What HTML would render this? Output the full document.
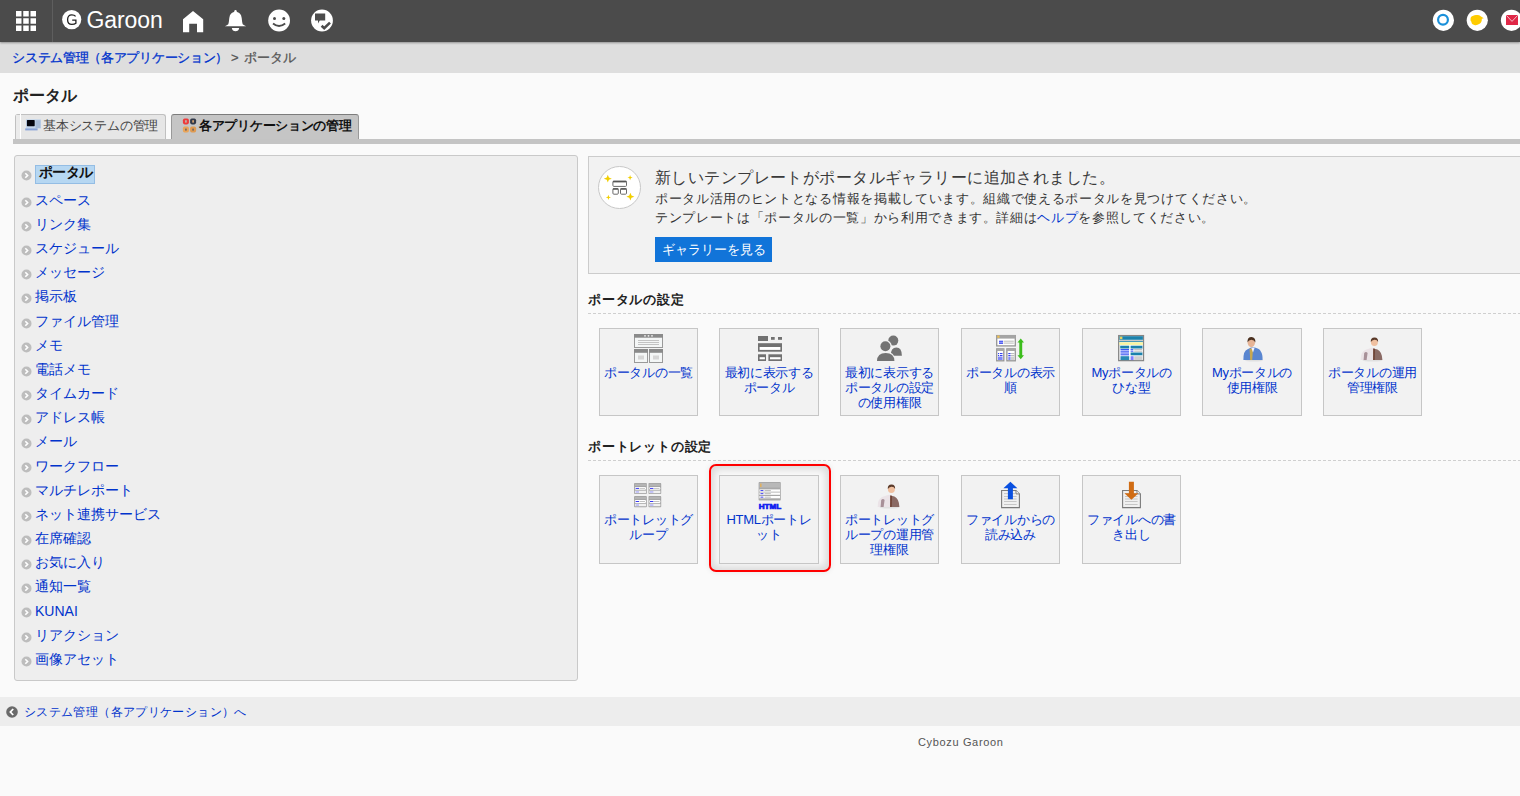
<!DOCTYPE html>
<html lang="ja">
<head>
<meta charset="utf-8">
<style>
*{box-sizing:border-box;margin:0;padding:0}
html,body{width:1520px;height:796px;overflow:hidden}
body{background:#fafafa;font-family:"Liberation Sans",sans-serif;font-size:13px;color:#333;position:relative}
.abs{position:absolute}
a{color:#0033cc;text-decoration:none}
.txt{white-space:nowrap;line-height:14px}
#hdr{left:0;top:0;width:1520px;height:42px;background:#4b4b4b;box-shadow:0 1px 2px rgba(0,0,0,.35);z-index:2}
#sep{left:52px;top:0;width:1px;height:42px;background:#5e5e5e}
#garoon{left:86.5px;top:7px;font-size:23px;line-height:26px;color:#fff;letter-spacing:-0.1px}
#crumb{left:0;top:42px;width:1520px;height:31px;background:#dedede}
#crumb .txt{top:50px}
#title{left:13px;top:88px;font-size:16px;font-weight:bold;color:#222;line-height:16px}
.tab{top:114px;height:25px;border:1px solid #bcbcbc;border-bottom:none;border-radius:3px 3px 0 0}
#tab1{left:15px;width:151px;background:#e6e6e6;border-color:#c0c0c0}
#tab1:before{content:"";position:absolute;left:4px;top:-1px;width:1px;height:25px;background:#fff}
#tab1:after{content:"";position:absolute;left:0;top:0;width:4px;height:24px;background:#ebebeb}
#tab2{left:171px;width:188px;background:#c5c5c5;border-color:#7c7c7c #999}
#bar{left:13px;top:139px;width:1507px;height:5px;background:#c4c4c4}
#left{left:14px;top:155px;width:564px;height:526px;background:#eeeeee;border:1px solid #c9c9c9;border-radius:3px}
.sel{left:35px;top:165px;width:60px;height:19px;background:#b6d7f2;border:1px solid #94bde4;font-weight:bold;color:#111;line-height:13px;padding-left:2.5px;white-space:nowrap;font-size:14px;letter-spacing:-0.4px}
.mi{left:35px;font-size:14px}
#notice{left:588px;top:156px;width:1000px;height:118px;background:#f2f2f2;border:1px solid #cccccc}
#ncirc{left:598px;top:166px;width:43px;height:43px;border-radius:50%;background:#fff;border:1px solid #c8c8c8}
.nl{left:655px;color:#333}
#gbtn{left:655px;top:237px;width:117px;height:25px;background:#1174d9;color:#fff;line-height:25px;padding-left:6.5px;white-space:nowrap}
.h2{left:588px;font-weight:bold;color:#222;letter-spacing:0.8px}
.dash{left:588px;width:932px;height:1px;background-image:linear-gradient(to right,#cfcfcf 0,#cfcfcf 3px,transparent 3px);background-size:5px 1px}
.btn{width:99px;height:88px;background:#f2f2f2;border:1px solid #c6c6c6}
.btn .ic{position:absolute;left:34px;top:5px;width:29px;height:29px}
.btn .ic svg{display:block}
.bl{position:absolute;left:0;top:35.5px;letter-spacing:-0.3px;white-space:nowrap;width:97px;text-align:center;line-height:15px;font-size:13px}
#hl{left:708.6px;top:463.6px;width:122.8px;height:108.8px;border:2.5px solid #ff0000;border-radius:7px;box-shadow:inset 0 0 8px 3px rgba(0,0,0,.14),0 0 5px 1px rgba(0,0,0,.06)}
#bbar{left:0;top:697px;width:1520px;height:29px;background:#ededed}
#foot{left:918px;top:736px;font-size:11px;color:#555;line-height:12px;white-space:nowrap;letter-spacing:0.65px}
</style>
</head>
<body>
<div id="hdr" class="abs">
  <svg class="abs" style="left:16px;top:11px" width="20" height="20" viewBox="0 0 20 20" fill="#fff">
    <rect x="0" y="0" width="5.5" height="5.5"/><rect x="7.25" y="0" width="5.5" height="5.5"/><rect x="14.5" y="0" width="5.5" height="5.5"/>
    <rect x="0" y="7.25" width="5.5" height="5.5"/><rect x="7.25" y="7.25" width="5.5" height="5.5"/><rect x="14.5" y="7.25" width="5.5" height="5.5"/>
    <rect x="0" y="14.5" width="5.5" height="5.5"/><rect x="7.25" y="14.5" width="5.5" height="5.5"/><rect x="14.5" y="14.5" width="5.5" height="5.5"/>
  </svg>
  <div id="sep" class="abs"></div>
  <svg class="abs" style="left:62px;top:10.4px" width="20" height="20" viewBox="0 0 20 20">
    <circle cx="9.7" cy="9.6" r="9.6" fill="#fff"/>
    <path d="M13.6 6.3 Q12.4 4.9 9.8 4.9 Q5.6 4.9 5.6 9.7 Q5.6 14.4 9.8 14.4 Q12.6 14.4 13.9 13.3 V10.2 H10.2" fill="none" stroke="#222" stroke-width="1.3"/>
  </svg>
  <div id="garoon" class="abs txt">Garoon</div>
  <!-- home -->
  <svg class="abs" style="left:182px;top:10px" width="23" height="23" viewBox="0 0 23 23" fill="#fff">
    <path d="M11 1 L21.2 9.2 V22.2 H15 V13.8 H7.2 V22.2 H1 V9.2 Z"/>
  </svg>
  <!-- bell -->
  <svg class="abs" style="left:224px;top:9px" width="23" height="24" viewBox="0 0 23 24" fill="#fff">
    <circle cx="11.5" cy="2.3" r="1.2"/>
    <path d="M11.5 2.8 Q6 3 5.3 9 Q4.9 13.6 4.3 15.2 Q3.1 16.4 0.9 17.2 H22.1 Q19.9 16.4 18.7 15.2 Q18.1 13.6 17.7 9 Q17 3 11.5 2.8 Z"/>
    <path d="M7.8 19 H15.2 Q14.6 22.2 11.5 22.3 Q8.4 22.2 7.8 19 Z"/>
  </svg>
  <!-- smiley -->
  <svg class="abs" style="left:267px;top:9px" width="24" height="24" viewBox="0 0 24 24">
    <circle cx="12.1" cy="11.5" r="10.9" fill="#fff"/>
    <circle cx="7.5" cy="9.5" r="1.5" fill="#4b4b4b"/><circle cx="16.8" cy="9.5" r="1.5" fill="#4b4b4b"/>
    <path d="M6 14.5 Q12 19.4 18.2 14.5" fill="none" stroke="#4b4b4b" stroke-width="1.9"/>
  </svg>
  <!-- checkbubble -->
  <svg class="abs" style="left:310px;top:9px" width="24" height="24" viewBox="0 0 24 24">
    <circle cx="12" cy="11.5" r="10.9" fill="#fff"/>
    <path d="M5 4.5 H15.2 V11.5 H9.8 L8 14.5 V11.5 H5 Z" fill="#4b4b4b"/>
    <path d="M11.6 16.8 L14.2 19.2 L20 13.6" fill="none" stroke="#4b4b4b" stroke-width="2.6"/>
  </svg>
  <!-- right -->
  <svg class="abs" style="left:1430px;top:8px" width="90" height="26" viewBox="0 0 90 26">
    <circle cx="13.4" cy="12.3" r="10.6" fill="#fff"/>
    <circle cx="13" cy="11.8" r="4.9" fill="none" stroke="#1a90da" stroke-width="2.2"/>
    <circle cx="47.3" cy="12.3" r="10.6" fill="#fff"/>
    <path d="M40.5 11.5 Q40.3 8.4 43.2 7.8 Q45 6.6 47.3 7.1 Q49.8 6.8 51 8.6 L53.8 10.3 L51.8 10.8 Q52 14.5 49.6 15.8 Q46.5 17.8 44.4 17 Q41.5 16.5 41.4 13.8 Q40.3 12.8 40.5 11.5 Z" fill="#ffcc00"/>
    <circle cx="81.5" cy="12.3" r="10.6" fill="#fff"/>
    <rect x="76" y="7" width="12" height="10" fill="#e02848"/>
    <path d="M76.3 7.3 L82 13.4 L87.7 7.3" fill="none" stroke="#f4c0c8" stroke-width="1"/>
  </svg>
</div>
<div id="crumb" class="abs">
</div>
<a class="abs txt" style="left:12.2px;top:50.5px;letter-spacing:-0.3px;-webkit-text-stroke:0.3px #0033cc">システム管理（各アプリケーション）</a>
<div class="abs txt" style="left:231px;top:50.5px;color:#555;-webkit-text-stroke:0.3px #555">&gt;</div><div class="abs txt" style="left:244px;top:50.5px;color:#555;-webkit-text-stroke:0.3px #555">ポータル</div>

<div id="title" class="abs txt">ポータル</div>
<div id="tab1" class="abs tab"></div>
<svg class="abs" style="left:25px;top:119px" width="17" height="13" viewBox="0 0 17 13">
  <rect x="1" y="0.3" width="15" height="9.4" fill="#c4d6ec"/>
  <rect x="1.9" y="1.1" width="7.8" height="6.1" rx="0.6" fill="#05060f"/>
  <rect x="10.5" y="1.2" width="5" height="7.8" fill="#a8bcd8"/>
  <rect x="0.2" y="9.4" width="12.4" height="2" fill="#8aa4d8"/>
</svg>
<div class="abs txt" style="left:43px;top:119px;color:#444;letter-spacing:-0.2px">基本システムの管理</div>
<div id="tab2" class="abs tab"></div>
<svg class="abs" style="left:182px;top:117.5px" width="15" height="15" viewBox="0 0 15 15">
  <rect x="0.9" y="0.4" width="6" height="6" rx="1.8" fill="#ee3a3a"/><rect x="3" y="2.2" width="1.8" height="2.4" fill="#c8a8a0"/>
  <rect x="8.1" y="0.4" width="6" height="6" rx="1.8" fill="#333a4a"/><rect x="10.2" y="2.2" width="1.8" height="2.4" fill="#d0a070"/>
  <rect x="0.9" y="8.5" width="6" height="6" rx="1.8" fill="#eaa458"/><rect x="3" y="10.6" width="1.8" height="2" fill="#7a6a60"/>
  <rect x="8.1" y="8.5" width="6" height="6" rx="1.8" fill="#e09a50"/><rect x="10.2" y="10.6" width="1.8" height="2" fill="#7a6a60"/>
</svg>
<div class="abs txt" style="left:199px;top:119px;font-weight:bold;color:#111;letter-spacing:-0.3px">各アプリケーションの管理</div>
<div id="bar" class="abs"></div>

<div id="left" class="abs"></div>
<svg class="abs" style="left:21px;top:170px" width="11" height="11" viewBox="0 0 11 11"><circle cx="5.5" cy="5.5" r="5" fill="#bdbdbd"/><path d="M4.3 3.2 L6.6 5.5 L4.3 7.8" stroke="#fff" stroke-width="1.6" fill="none"/></svg>
<div class="abs sel">ポータル</div>
<svg class="abs" style="left:21px;top:196.7px" width="11" height="11" viewBox="0 0 11 11"><circle cx="5.5" cy="5.5" r="5" fill="#bdbdbd"/><path d="M4.3 3.2 L6.6 5.5 L4.3 7.8" stroke="#fff" stroke-width="1.6" fill="none"/></svg>
<a class="abs mi txt" style="top:192.80px">スペース</a>
<svg class="abs" style="left:21px;top:220.86px" width="11" height="11" viewBox="0 0 11 11"><circle cx="5.5" cy="5.5" r="5" fill="#bdbdbd"/><path d="M4.3 3.2 L6.6 5.5 L4.3 7.8" stroke="#fff" stroke-width="1.6" fill="none"/></svg>
<a class="abs mi txt" style="top:216.96px">リンク集</a>
<svg class="abs" style="left:21px;top:245.02px" width="11" height="11" viewBox="0 0 11 11"><circle cx="5.5" cy="5.5" r="5" fill="#bdbdbd"/><path d="M4.3 3.2 L6.6 5.5 L4.3 7.8" stroke="#fff" stroke-width="1.6" fill="none"/></svg>
<a class="abs mi txt" style="top:241.12px">スケジュール</a>
<svg class="abs" style="left:21px;top:269.18px" width="11" height="11" viewBox="0 0 11 11"><circle cx="5.5" cy="5.5" r="5" fill="#bdbdbd"/><path d="M4.3 3.2 L6.6 5.5 L4.3 7.8" stroke="#fff" stroke-width="1.6" fill="none"/></svg>
<a class="abs mi txt" style="top:265.28px">メッセージ</a>
<svg class="abs" style="left:21px;top:293.34px" width="11" height="11" viewBox="0 0 11 11"><circle cx="5.5" cy="5.5" r="5" fill="#bdbdbd"/><path d="M4.3 3.2 L6.6 5.5 L4.3 7.8" stroke="#fff" stroke-width="1.6" fill="none"/></svg>
<a class="abs mi txt" style="top:289.44px">掲示板</a>
<svg class="abs" style="left:21px;top:317.5px" width="11" height="11" viewBox="0 0 11 11"><circle cx="5.5" cy="5.5" r="5" fill="#bdbdbd"/><path d="M4.3 3.2 L6.6 5.5 L4.3 7.8" stroke="#fff" stroke-width="1.6" fill="none"/></svg>
<a class="abs mi txt" style="top:313.60px">ファイル管理</a>
<svg class="abs" style="left:21px;top:341.66px" width="11" height="11" viewBox="0 0 11 11"><circle cx="5.5" cy="5.5" r="5" fill="#bdbdbd"/><path d="M4.3 3.2 L6.6 5.5 L4.3 7.8" stroke="#fff" stroke-width="1.6" fill="none"/></svg>
<a class="abs mi txt" style="top:337.76px">メモ</a>
<svg class="abs" style="left:21px;top:365.82px" width="11" height="11" viewBox="0 0 11 11"><circle cx="5.5" cy="5.5" r="5" fill="#bdbdbd"/><path d="M4.3 3.2 L6.6 5.5 L4.3 7.8" stroke="#fff" stroke-width="1.6" fill="none"/></svg>
<a class="abs mi txt" style="top:361.92px">電話メモ</a>
<svg class="abs" style="left:21px;top:389.98px" width="11" height="11" viewBox="0 0 11 11"><circle cx="5.5" cy="5.5" r="5" fill="#bdbdbd"/><path d="M4.3 3.2 L6.6 5.5 L4.3 7.8" stroke="#fff" stroke-width="1.6" fill="none"/></svg>
<a class="abs mi txt" style="top:386.08px">タイムカード</a>
<svg class="abs" style="left:21px;top:414.14px" width="11" height="11" viewBox="0 0 11 11"><circle cx="5.5" cy="5.5" r="5" fill="#bdbdbd"/><path d="M4.3 3.2 L6.6 5.5 L4.3 7.8" stroke="#fff" stroke-width="1.6" fill="none"/></svg>
<a class="abs mi txt" style="top:410.24px">アドレス帳</a>
<svg class="abs" style="left:21px;top:438.3px" width="11" height="11" viewBox="0 0 11 11"><circle cx="5.5" cy="5.5" r="5" fill="#bdbdbd"/><path d="M4.3 3.2 L6.6 5.5 L4.3 7.8" stroke="#fff" stroke-width="1.6" fill="none"/></svg>
<a class="abs mi txt" style="top:434.40px">メール</a>
<svg class="abs" style="left:21px;top:462.46px" width="11" height="11" viewBox="0 0 11 11"><circle cx="5.5" cy="5.5" r="5" fill="#bdbdbd"/><path d="M4.3 3.2 L6.6 5.5 L4.3 7.8" stroke="#fff" stroke-width="1.6" fill="none"/></svg>
<a class="abs mi txt" style="top:458.56px">ワークフロー</a>
<svg class="abs" style="left:21px;top:486.62px" width="11" height="11" viewBox="0 0 11 11"><circle cx="5.5" cy="5.5" r="5" fill="#bdbdbd"/><path d="M4.3 3.2 L6.6 5.5 L4.3 7.8" stroke="#fff" stroke-width="1.6" fill="none"/></svg>
<a class="abs mi txt" style="top:482.72px">マルチレポート</a>
<svg class="abs" style="left:21px;top:510.78px" width="11" height="11" viewBox="0 0 11 11"><circle cx="5.5" cy="5.5" r="5" fill="#bdbdbd"/><path d="M4.3 3.2 L6.6 5.5 L4.3 7.8" stroke="#fff" stroke-width="1.6" fill="none"/></svg>
<a class="abs mi txt" style="top:506.88px">ネット連携サービス</a>
<svg class="abs" style="left:21px;top:534.94px" width="11" height="11" viewBox="0 0 11 11"><circle cx="5.5" cy="5.5" r="5" fill="#bdbdbd"/><path d="M4.3 3.2 L6.6 5.5 L4.3 7.8" stroke="#fff" stroke-width="1.6" fill="none"/></svg>
<a class="abs mi txt" style="top:531.04px">在席確認</a>
<svg class="abs" style="left:21px;top:559.1px" width="11" height="11" viewBox="0 0 11 11"><circle cx="5.5" cy="5.5" r="5" fill="#bdbdbd"/><path d="M4.3 3.2 L6.6 5.5 L4.3 7.8" stroke="#fff" stroke-width="1.6" fill="none"/></svg>
<a class="abs mi txt" style="top:555.20px">お気に入り</a>
<svg class="abs" style="left:21px;top:583.26px" width="11" height="11" viewBox="0 0 11 11"><circle cx="5.5" cy="5.5" r="5" fill="#bdbdbd"/><path d="M4.3 3.2 L6.6 5.5 L4.3 7.8" stroke="#fff" stroke-width="1.6" fill="none"/></svg>
<a class="abs mi txt" style="top:579.36px">通知一覧</a>
<svg class="abs" style="left:21px;top:607.42px" width="11" height="11" viewBox="0 0 11 11"><circle cx="5.5" cy="5.5" r="5" fill="#bdbdbd"/><path d="M4.3 3.2 L6.6 5.5 L4.3 7.8" stroke="#fff" stroke-width="1.6" fill="none"/></svg>
<a class="abs mi txt" style="top:603.52px">KUNAI</a>
<svg class="abs" style="left:21px;top:631.58px" width="11" height="11" viewBox="0 0 11 11"><circle cx="5.5" cy="5.5" r="5" fill="#bdbdbd"/><path d="M4.3 3.2 L6.6 5.5 L4.3 7.8" stroke="#fff" stroke-width="1.6" fill="none"/></svg>
<a class="abs mi txt" style="top:627.68px">リアクション</a>
<svg class="abs" style="left:21px;top:655.74px" width="11" height="11" viewBox="0 0 11 11"><circle cx="5.5" cy="5.5" r="5" fill="#bdbdbd"/><path d="M4.3 3.2 L6.6 5.5 L4.3 7.8" stroke="#fff" stroke-width="1.6" fill="none"/></svg>
<a class="abs mi txt" style="top:651.84px">画像アセット</a>

<div id="notice" class="abs"></div>
<div id="ncirc" class="abs"></div>
<svg class="abs" style="left:598px;top:166px" width="43" height="43" viewBox="0 0 43 43">
  <rect x="14.9" y="15.2" width="13.6" height="5.2" rx="1" fill="none" stroke="#6a6a6a" stroke-width="1"/>
  <path d="M14.9 15.6 H28.5" stroke="#555" stroke-width="1.6"/>
  <rect x="14.9" y="22.6" width="5.4" height="5.6" rx="1" fill="none" stroke="#6a6a6a" stroke-width="1"/>
  <rect x="22.5" y="22.6" width="6" height="5.6" rx="1" fill="none" stroke="#6a6a6a" stroke-width="1"/>
  <path d="M14.9 23 H20.3 M22.5 23 H28.5" stroke="#555" stroke-width="1.3"/>
  <g fill="#f2cf00">
    <path d="M9.8 8.8 L10.9 11.6 L13.8 12.7 L10.9 13.8 L9.8 16.6 L8.7 13.8 L5.8 12.7 L8.7 11.6 Z"/>
    <path d="M32.1 9 L32.8 10.9 L34.7 11.6 L32.8 12.3 L32.1 14.2 L31.4 12.3 L29.5 11.6 L31.4 10.9 Z"/>
    <path d="M10.4 28.8 L11.1 30.7 L13 31.4 L11.1 32.1 L10.4 34 L9.7 32.1 L7.8 31.4 L9.7 30.7 Z"/>
    <path d="M32.4 26.7 L33.5 29.5 L36.4 30.7 L33.5 31.8 L32.4 34.6 L31.3 31.8 L28.4 30.7 L31.3 29.5 Z"/>
  </g>
</svg>
<div class="abs txt nl" style="top:170px;font-size:16px;line-height:16px;letter-spacing:0.43px;color:#3a3a3a">新しいテンプレートがポータルギャラリーに追加されました。</div>
<div class="abs txt nl" style="top:192px;letter-spacing:0.68px">ポータル活用のヒントとなる情報を掲載しています。組織で使えるポータルを見つけてください。</div>
<div class="abs txt nl" style="top:211px;letter-spacing:0.66px">テンプレートは「ポータルの一覧」から利用できます。詳細は<a>ヘルプ</a>を参照してください。</div>
<div id="gbtn" class="abs">ギャラリーを見る</div>

<div class="abs txt h2" style="top:293px">ポータルの設定</div>
<div class="abs dash" style="top:313px"></div>
<div class="abs txt h2" style="top:440px">ポートレットの設定</div>
<div class="abs dash" style="top:460px"></div>
<div id="hl" class="abs"></div>
<div class="abs btn" style="left:599px;top:328px"><div class="ic" style="left:34px"><svg width="29" height="29" viewBox="0 0 29 29">
<rect x="0.5" y="0.5" width="28" height="13" fill="#f4f6f6" stroke="#9a9a9a"/>
<rect x="0" y="0" width="29" height="3.7" fill="#8a8a8a"/>
<circle cx="11" cy="1.8" r="0.9" fill="#eee"/><circle cx="14.5" cy="1.8" r="0.9" fill="#eee"/><circle cx="18" cy="1.8" r="0.9" fill="#eee"/>
<path d="M4 6.5H25M4 8.5H25M4 10.5H25" stroke="#bdbdbd" stroke-width="0.9"/>
<rect x="0.5" y="15.5" width="13" height="13" fill="#f4f6f6" stroke="#9a9a9a"/><rect x="0" y="15" width="14" height="3.8" fill="#8a8a8a"/>
<rect x="15.5" y="15.5" width="13" height="13" fill="#f4f6f6" stroke="#9a9a9a"/><rect x="15" y="15" width="14" height="3.8" fill="#8a8a8a"/>
<rect x="4" y="21.5" width="6" height="4" fill="#d6d6d6"/><rect x="19" y="21.5" width="6" height="4" fill="#d6d6d6"/>
</svg></div><a class="bl" style="width:97px">ポータルの一覧</a></div>
<div class="abs btn" style="left:719px;top:328px;width:100px"><div class="ic" style="left:34.5px"><svg width="29" height="29" viewBox="0 0 29 29" fill="#717171">
<rect x="3" y="2" width="10" height="5"/><rect x="16" y="3" width="3.7" height="2.8"/><rect x="23" y="3" width="4" height="2.8"/>
<rect x="3" y="9.2" width="24" height="8.5"/><rect x="4.6" y="13" width="20.8" height="2.9" fill="#fff"/>
<rect x="3" y="20.3" width="8" height="6.7"/><rect x="4.6" y="23.2" width="5.3" height="2.1" fill="#fff"/>
<rect x="13.4" y="20.3" width="13.6" height="6.7"/><rect x="15" y="23.2" width="10.6" height="2.1" fill="#fff"/>
</svg></div><a class="bl" style="width:98px">最初に表示する<br>ポータル</a></div>
<div class="abs btn" style="left:840px;top:328px"><div class="ic" style="left:34px"><svg width="29" height="29" viewBox="0 0 29 29">
<circle cx="18.3" cy="6.6" r="5" fill="#737373"/>
<path d="M15.6 21.8 Q15.8 13.4 21.4 13.4 Q26.9 13.4 26.9 21.8 Z" fill="#737373"/>
<circle cx="10.4" cy="12.3" r="6.3" fill="#f2f2f2"/>
<path d="M0.8 28.4 Q1.2 17.6 10.7 17.6 Q20.4 17.6 20.8 28.4 Z" fill="#f2f2f2"/>
<circle cx="10.4" cy="12.3" r="5" fill="#737373"/>
<path d="M2 27 Q2.2 19 10.7 19 Q19.2 19 19.4 27 Z" fill="#737373"/>
</svg></div><a class="bl" style="width:97px">最初に表示する<br>ポータルの設定<br>の使用権限</a></div>
<div class="abs btn" style="left:961px;top:328px"><div class="ic" style="left:34px"><svg width="29" height="29" viewBox="0 0 29 29">
<rect x="0.7" y="1.6" width="18.6" height="10.3" fill="#fff" stroke="#959595" stroke-width="1.3"/>
<rect x="0.5" y="1" width="19.3" height="3.6" fill="#a4a4a4"/>
<rect x="1.3" y="1.6" width="2.2" height="2.2" fill="#f0c050"/>
<path d="M3 7.2H7M3 9.1H7" stroke="#1a2af0" stroke-width="1.1"/><path d="M7.6 7.2H17.8M7.6 9.1H17.8" stroke="#a8a8a8" stroke-width="0.8"/>
<rect x="0.7" y="14.9" width="7.1" height="11.9" fill="#fff" stroke="#959595" stroke-width="1.3"/><rect x="0.5" y="14.4" width="7.6" height="2.6" fill="#a8a8a8"/>
<rect x="10.9" y="14.9" width="8.4" height="11.9" fill="#fff" stroke="#959595" stroke-width="1.3"/><rect x="10.6" y="14.4" width="9" height="2.6" fill="#a8a8a8"/>
<path d="M2 19.6H3M3.8 19.6H6.5M2 21.6H3M3.8 21.6H6.5" stroke="#2030f0" stroke-width="1"/>
<rect x="2" y="22.6" width="4.6" height="3.4" fill="#8088f8"/>
<path d="M12.3 19.6H14.6M12.3 21.6H14.6" stroke="#2030f0" stroke-width="1"/><path d="M14.8 19.6H18.3M14.8 21.6H18.3" stroke="#b0b0b0" stroke-width="0.9"/>
<rect x="12.3" y="22.6" width="2.3" height="3.4" fill="#8088f8"/><rect x="14.8" y="22.6" width="3.5" height="3.4" fill="#d0d0d0"/>
<path d="M24.75 4.4 L28 8.4 H26.2 V21.2 H28 L24.75 25.2 L21.5 21.2 H23.3 V8.4 H21.5 Z" fill="#3cbd1c"/>
</svg></div><a class="bl" style="width:97px">ポータルの表示<br>順</a></div>
<div class="abs btn" style="left:1082px;top:328px"><div class="ic" style="left:34px"><svg width="29" height="29" viewBox="0 0 29 29">
<rect x="1.7" y="1.6" width="24.8" height="25" fill="#fff" stroke="#858585" stroke-width="1.3"/>
<rect x="2.3" y="2.2" width="23.6" height="3.6" fill="#1b82ac"/><rect x="2.8" y="2.6" width="2.6" height="2.6" fill="#e8d060"/>
<rect x="2.3" y="6" width="23.6" height="1" fill="#c8c8c8"/><rect x="2.3" y="7.2" width="23.6" height="0.9" fill="#1b82ac"/>
<rect x="2.3" y="8.3" width="23.6" height="2.6" fill="#f8f4a0"/>
<rect x="3.2" y="11.7" width="9" height="2.8" fill="#1b82ac"/><rect x="13.6" y="11.7" width="11.8" height="2.8" fill="#1b82ac"/>
<path d="M3.5 15.6H12M3.5 17.2H12M3.5 19H12M3.5 20.8H12" stroke="#1030f0" stroke-width="0.9"/>
<path d="M13.6 15.6H16.4M13.6 17.2H16.4" stroke="#2040f0" stroke-width="0.9"/><path d="M17.2 15.6H25M17.2 17.2H25" stroke="#aaa" stroke-width="0.8"/>
<rect x="13.6" y="18.5" width="11.8" height="2.8" fill="#1b82ac"/>
<rect x="3.5" y="22.2" width="8.7" height="3.9" fill="#2a8ab4"/><rect x="13.6" y="22.2" width="3" height="3.9" fill="#8080ff"/><rect x="17.2" y="22.2" width="8" height="3.9" fill="#d0d0d0"/>
</svg></div><a class="bl" style="width:97px">Myポータルの<br>ひな型</a></div>
<div class="abs btn" style="left:1202px;top:328px;width:100px"><div class="ic" style="left:34.5px"><svg width="29" height="29" viewBox="0 0 29 29">
<ellipse cx="16" cy="26.6" rx="9" ry="1" fill="#e0e0e0"/>
<path d="M5.4 26 Q5.2 16.6 9.6 15.2 L13 13.4 L16.8 13.6 Q21.6 14.8 22.8 17.4 Q24.8 20 24.6 26 Z" fill="#5a86d0"/>
<path d="M11.6 15 L13.6 14.2 L15 15.4 L14.2 26 H12.2 Z" fill="#c8a850"/>
<path d="M13.4 14 L16.6 13.8 L15 18.6 Z" fill="#f4f4ff"/>
<g transform="translate(-1,0)"><ellipse cx="14.3" cy="8.6" rx="3.7" ry="4.6" fill="#e6b496"/>
<path d="M10.5 8.2 Q10.2 3 14.6 3 Q18.6 3.2 18.4 8.4 Q17.2 5.8 14.4 5.7 Q11.8 5.8 10.5 8.2Z" fill="#4a3020"/></g>
</svg></div><a class="bl" style="width:98px">Myポータルの<br>使用権限</a></div>
<div class="abs btn" style="left:1323px;top:328px"><div class="ic" style="left:34px"><svg width="29" height="29" viewBox="0 0 29 29">
<ellipse cx="14.5" cy="26.6" rx="10" ry="1" fill="#e0e0e0"/>
<path d="M2.7 26 Q2.6 18 7 16 L13.8 13.8 L18 15 Q24.2 16.6 24.4 26 Z" fill="#ebe3e7"/>
<path d="M6.2 19 Q8 16.8 9.6 19 L8.6 26 H5.6 Z" fill="#a89098"/>
<path d="M15.2 14.6 L19.4 15.6 Q24 17.6 24.4 26 H15.4 Z" fill="#8a6a64"/>
<path d="M15.4 14.4 L16.8 14.8 L16.6 26 H15.2 Z" fill="#6a3a2a"/>
<ellipse cx="16.4" cy="8" rx="3.5" ry="4.1" fill="#f0c0a0"/>
<path d="M12.8 8 Q12.4 3.4 16.6 3.5 Q20.4 3.6 20.1 8 Q19.2 5.6 16.4 5.8 Q14 6 12.8 8Z" fill="#5a3a2a"/>
</svg></div><a class="bl" style="width:97px">ポータルの運用<br>管理権限</a></div>
<div class="abs btn" style="left:599px;top:475px;height:89px"><div class="ic" style="left:34px"><svg width="29" height="29" viewBox="0 0 29 29">
<g>
<rect x="0.1" y="2" width="12.7" height="11.1" rx="0.8" fill="#a0a0a0"/>
<rect x="0.9" y="2.6" width="11.1" height="2.6" fill="#b4b4b4"/>
<rect x="0.9" y="6" width="11.1" height="2.8" rx="1" fill="#fff"/>
<rect x="0.9" y="9.6" width="11.1" height="2.6" fill="#f0f0f0"/>
<rect x="1.6" y="6.9" width="3.4" height="1" fill="#3a3af0"/>
<rect x="1.6" y="10.2" width="3.4" height="1.5" fill="#b4b4f8"/>
<path d="M5.5 7.4H11" stroke="#999" stroke-width="0.6"/>
</g>
<g transform="translate(14.4,0)">
<rect x="0.1" y="2" width="12.7" height="11.1" rx="0.8" fill="#a0a0a0"/>
<rect x="0.9" y="2.6" width="11.1" height="2.6" fill="#b4b4b4"/>
<rect x="0.9" y="6" width="11.1" height="2.8" rx="1" fill="#fff"/>
<rect x="0.9" y="9.6" width="11.1" height="2.6" fill="#f0f0f0"/>
<rect x="1.6" y="6.9" width="3.4" height="1" fill="#3a3af0"/>
<rect x="1.6" y="10.2" width="3.4" height="1.5" fill="#b4b4f8"/>
<path d="M5.5 7.4H11" stroke="#999" stroke-width="0.6"/>
</g>
<g transform="translate(0,13.1)">
<rect x="0.1" y="2" width="12.7" height="11.1" rx="0.8" fill="#a0a0a0"/>
<rect x="0.9" y="2.6" width="11.1" height="2.6" fill="#b4b4b4"/>
<rect x="0.9" y="6" width="11.1" height="2.8" rx="1" fill="#fff"/>
<rect x="0.9" y="9.6" width="11.1" height="2.6" fill="#f0f0f0"/>
<rect x="1.6" y="6.9" width="3.4" height="1" fill="#3a3af0"/>
<rect x="1.6" y="10.2" width="3.4" height="1.5" fill="#b4b4f8"/>
<path d="M5.5 7.4H11" stroke="#999" stroke-width="0.6"/>
</g>
<g transform="translate(14.4,13.1)">
<rect x="0.1" y="2" width="12.7" height="11.1" rx="0.8" fill="#a0a0a0"/>
<rect x="0.9" y="2.6" width="11.1" height="2.6" fill="#b4b4b4"/>
<rect x="0.9" y="6" width="11.1" height="2.8" rx="1" fill="#fff"/>
<rect x="0.9" y="9.6" width="11.1" height="2.6" fill="#f0f0f0"/>
<rect x="1.6" y="6.9" width="3.4" height="1" fill="#3a3af0"/>
<rect x="1.6" y="10.2" width="3.4" height="1.5" fill="#b4b4f8"/>
<path d="M5.5 7.4H11" stroke="#999" stroke-width="0.6"/>
</g></svg></div><a class="bl" style="width:97px">ポートレットグ<br>ループ</a></div>
<div class="abs btn" style="left:719px;top:475px;width:100px;height:89px"><div class="ic" style="left:34.5px"><svg width="29" height="29" viewBox="0 0 29 29">
<rect x="3.6" y="1.1" width="22.2" height="18.5" rx="0.8" fill="#a8a8a8"/>
<rect x="4.4" y="2" width="20.6" height="4.6" fill="#b8b8b8"/>
<rect x="5" y="2.6" width="1.6" height="3.4" fill="#e0b060"/>
<rect x="4.4" y="8.4" width="20.6" height="2.3" fill="#fff"/>
<rect x="4.4" y="11.5" width="20.6" height="2.3" fill="#fff"/>
<rect x="4.4" y="15" width="20.6" height="2.3" fill="#fff"/>
<path d="M5.5 9.55H8.4M5.5 12.65H8.4M5.5 16.15H8.4" stroke="#4040f0" stroke-width="1"/>
<path d="M9.6 9.55H15.8M9.6 12.65H15.8M9.6 16.15H15.8" stroke="#888" stroke-width="0.6"/>
<text x="15" y="28.2" text-anchor="middle" font-family="Liberation Sans" font-weight="bold" font-size="7.4" fill="#1020f0" stroke="#1020f0" stroke-width="0.7" textLength="22.4" lengthAdjust="spacingAndGlyphs">HTML</text>
</svg></div><a class="bl" style="width:98px">HTMLポートレ<br>ット</a></div>
<div class="abs btn" style="left:840px;top:475px;height:89px"><div class="ic" style="left:34px"><svg width="29" height="29" viewBox="0 0 29 29">
<ellipse cx="14.5" cy="26.6" rx="10" ry="1" fill="#e0e0e0"/>
<path d="M2.7 26 Q2.6 18 7 16 L13.8 13.8 L18 15 Q24.2 16.6 24.4 26 Z" fill="#ebe3e7"/>
<path d="M6.2 19 Q8 16.8 9.6 19 L8.6 26 H5.6 Z" fill="#a89098"/>
<path d="M15.2 14.6 L19.4 15.6 Q24 17.6 24.4 26 H15.4 Z" fill="#8a6a64"/>
<path d="M15.4 14.4 L16.8 14.8 L16.6 26 H15.2 Z" fill="#6a3a2a"/>
<ellipse cx="16.4" cy="8" rx="3.5" ry="4.1" fill="#f0c0a0"/>
<path d="M12.8 8 Q12.4 3.4 16.6 3.5 Q20.4 3.6 20.1 8 Q19.2 5.6 16.4 5.8 Q14 6 12.8 8Z" fill="#5a3a2a"/>
</svg></div><a class="bl" style="width:97px">ポートレットグ<br>ループの運用管<br>理権限</a></div>
<div class="abs btn" style="left:961px;top:475px;height:89px"><div class="ic" style="left:34px"><svg width="29" height="29" viewBox="0 0 29 29">
<path d="M5.6 9.5 H20 L23.4 12.9 V26.6 H5.6 Z" fill="#f0f0f0" stroke="#7a7a7a" stroke-width="1.1"/>
<path d="M20 9.5 V12.9 H23.4" fill="#fff" stroke="#7a7a7a" stroke-width="1"/>
<path d="M8 12.6H19M8 15.5H20.6M8 18H20.6M8 20.5H20.6M8 23.5H20.6" stroke="#bbb" stroke-width="0.8"/>
<path d="M14.4 0.8 L21.4 7.2 H16.9 V18.3 H11.9 V7.2 H7.4 Z" fill="#0a50e0"/>
</svg></div><a class="bl" style="width:97px">ファイルからの<br>読み込み</a></div>
<div class="abs btn" style="left:1082px;top:475px;height:89px"><div class="ic" style="left:34px"><svg width="29" height="29" viewBox="0 0 29 29">
<path d="M5.6 9.5 H20 L23.4 12.9 V26.6 H5.6 Z" fill="#f0f0f0" stroke="#7a7a7a" stroke-width="1.1"/>
<path d="M20 9.5 V12.9 H23.4" fill="#fff" stroke="#7a7a7a" stroke-width="1"/>
<path d="M8 12.6H19M8 15.5H20.6M8 18H20.6M8 20.5H20.6M8 23.5H20.6" stroke="#bbb" stroke-width="0.8"/>
<path d="M11.9 0.8 H16.9 V12.2 H21.4 L14.4 18.7 L7.4 12.2 H11.9 Z" fill="#d06c14"/>
</svg></div><a class="bl" style="width:97px">ファイルへの書<br>き出し</a></div>

<div id="bbar" class="abs"></div>
<svg class="abs" style="left:6px;top:706px" width="12" height="12" viewBox="0 0 12 12">
  <circle cx="6" cy="6" r="5.8" fill="#6a6a6a"/>
  <path d="M7.2 3 L4.4 6 L7.2 9" fill="none" stroke="#fff" stroke-width="1.8"/>
</svg>
<a class="abs txt" style="left:24px;top:705px;font-size:12px;letter-spacing:0.37px">システム管理（各アプリケーション）へ</a>
<div id="foot" class="abs">Cybozu Garoon</div>
</body>
</html>
